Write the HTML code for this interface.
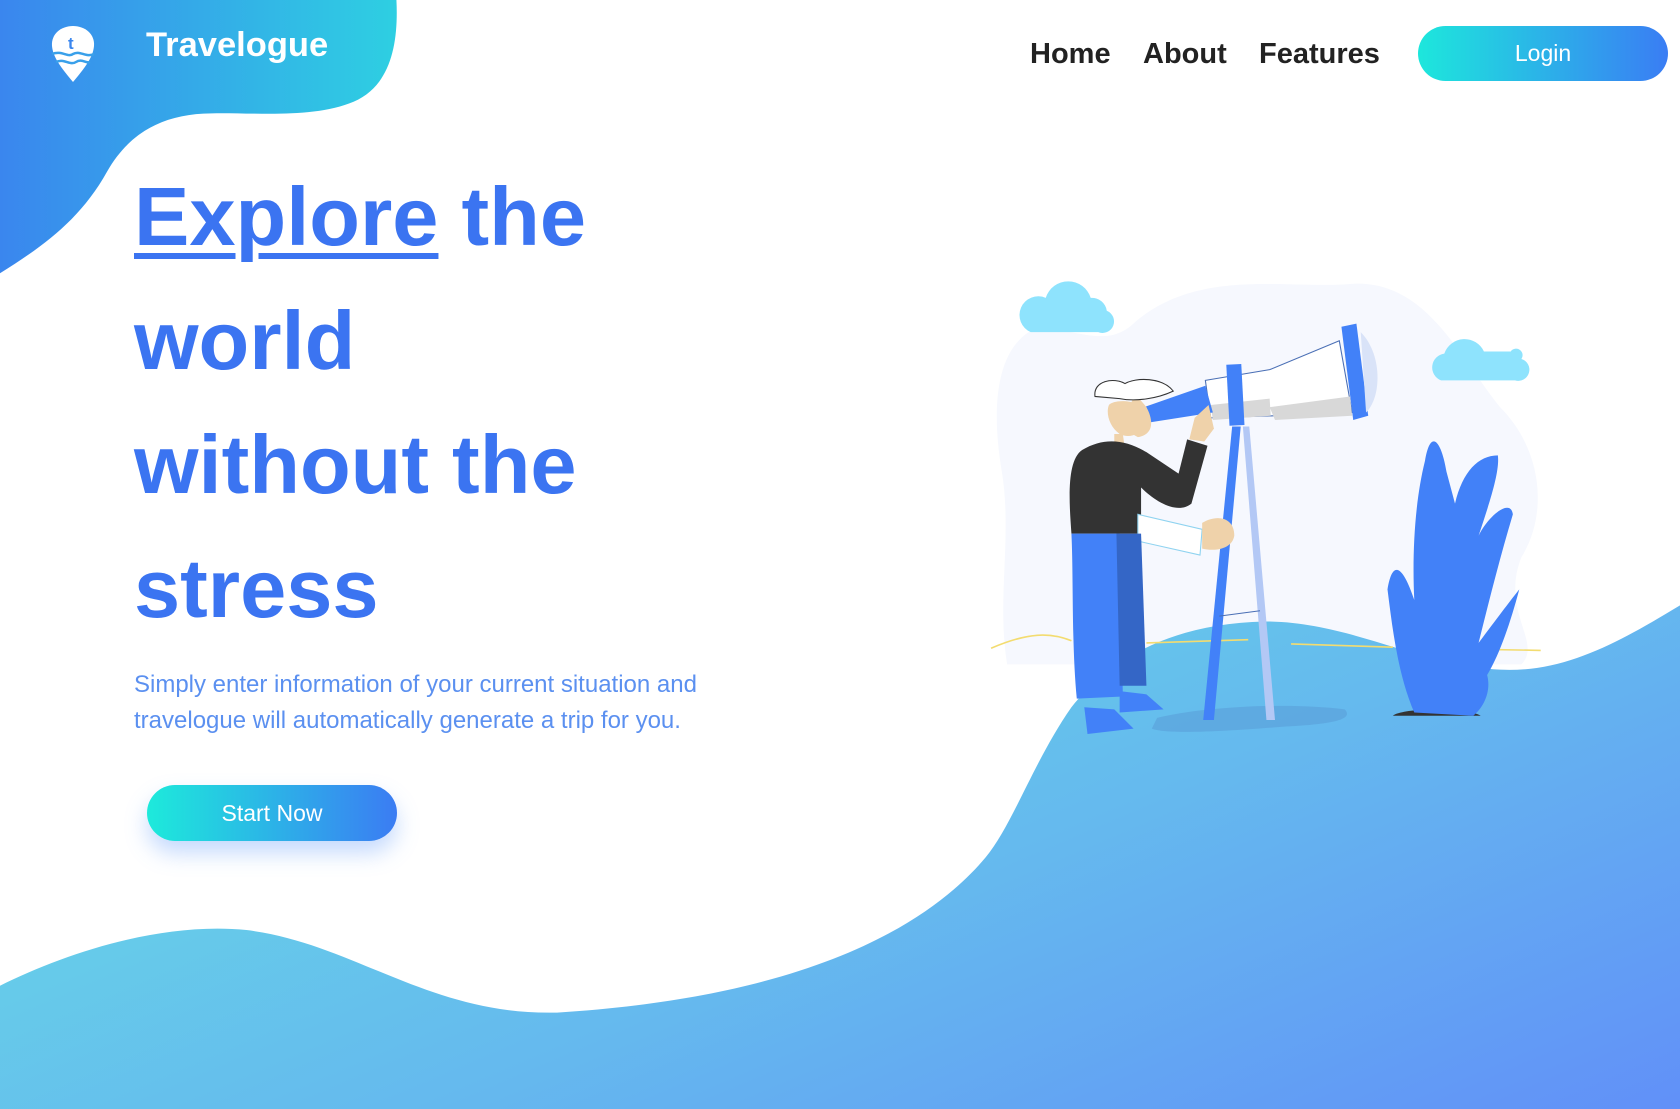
<!DOCTYPE html>
<html><head><meta charset="utf-8"><style>
html,body{margin:0;padding:0;width:1680px;height:1109px;overflow:hidden;background:#fff;font-family:"Liberation Sans",Arial,sans-serif}
svg.bg{position:absolute;left:0;top:0;width:1680px;height:1109px}
.t{position:absolute;white-space:nowrap}
.brand{left:146px;top:26px;font-size:34.5px;font-weight:bold;color:#fff}
.nav{top:38px;font-size:29px;font-weight:bold;color:#222}
.login{left:1418px;top:26px;width:250px;height:55px;border-radius:28px;background:linear-gradient(90deg,#1de7dc,#3a7df4);color:#fff;font-size:23px;text-align:center;line-height:55px}
h1{position:absolute;left:134px;top:155px;margin:0;font-size:83px;line-height:124px;font-weight:bold;color:#3b74f1}
h1 u{text-decoration-thickness:6px;text-underline-offset:8px}
.p{left:134px;top:667px;font-size:24px;line-height:36px;color:#5b90f0}
.btn{left:147px;top:785px;width:250px;height:56px;border-radius:28px;background:linear-gradient(90deg,#1deadb,#3b7cf3);color:#fff;font-size:23px;text-align:center;line-height:56px;box-shadow:0 12px 22px rgba(90,150,250,.35)}
</style></head><body>
<svg class="bg" viewBox="0 0 1568 1035" preserveAspectRatio="none">
<defs>
<linearGradient id="g1" x1="0" y1="0" x2="1" y2="0"><stop offset="0" stop-color="#3a86ee"/><stop offset="1" stop-color="#2ecfe2"/></linearGradient>
<linearGradient id="g2" x1="0" y1="0.3" x2="1" y2="1"><stop offset="0" stop-color="#66d8e6"/><stop offset="0.5" stop-color="#65b9ee"/><stop offset="1" stop-color="#6190f8"/></linearGradient>
</defs>
<path d="M0 0H370C372 40 365 80 330 95C290 112 230 104 190 106C150 108 120 125 100 160C75 205 40 230 0 255Z" fill="url(#g1)"/>
<path d="M960 310C1000 300 1030 330 1060 300C1120 250 1200 270 1260 265C1330 260 1360 330 1400 380C1440 420 1445 480 1420 520C1400 570 1440 600 1420 620L940 620C930 560 945 500 935 440C925 380 930 330 960 310Z" fill="#f6f8fe"/>
<path d="M1568 565C1510 600 1460 628 1400 625C1320 620 1260 580 1180 580C1100 582 1040 610 1000 660C965 710 945 770 920 800C870 860 760 930 520 945C400 948 330 880 230 868C150 860 60 890 0 920V1035H1568Z" fill="url(#g2)"/>
<path d="M925 605C960 590 980 590 1000 598M1070 600L1165 597M1205 601L1300 604M1380 606L1438 607" stroke="#f3dc70" stroke-width="1.5" fill="none"/>
<path d="M962 310H1025A10 10 0 0 0 1033 290A14 14 0 0 0 1018 278A22 22 0 0 0 976 278A14 14 0 0 0 962 310Z" fill="#8ee3fd"/>
<path d="M1345 355H1414A8 8 0 0 0 1420 335A6 6 0 0 0 1410 328H1385A20 20 0 0 0 1348 330A13 13 0 0 0 1345 355Z" fill="#8ee3fd"/>
<path d="M1080 670C1120 660 1200 655 1255 662C1265 672 1240 676 1200 678C1150 682 1090 686 1075 680Z" fill="#5a9fd8" opacity=".6"/>
<path d="M1125 355L1185 345L1250 318L1262 385L1190 388L1130 390Z" fill="#fff" stroke="#4a6fb5" stroke-width="1"/>
<path d="M1185 380L1260 370L1262 388L1190 392ZM1130 378L1185 372L1186 388L1132 392Z" fill="#d8d8d8"/>
<path d="M1252 305L1266 302L1277 388L1263 392Z" fill="#4281f8"/>
<path d="M1270 310C1290 330 1290 370 1275 385Z" fill="#d9e3f8"/>
<path d="M1062 382L1125 360L1132 385L1068 395Z" fill="#4281f8"/>
<rect x="1146" y="340" width="14" height="57" fill="#4281f8" transform="rotate(-3 1153 368)"/>
<path d="M1150 398L1158 398L1133 672L1123 672Z" fill="#4281f8"/>
<path d="M1160 398L1166 398L1190 672L1182 672Z" fill="#b3c8f5"/>
<path d="M1138 575L1176 570" stroke="#4a6fb5" stroke-width="1"/>
<path d="M1060 368C1050 385 1045 400 1062 408C1075 406 1078 395 1070 380Z" fill="#efd2aa"/>
<path d="M1022 370C1020 355 1040 352 1050 358C1060 352 1085 352 1095 365C1080 372 1060 375 1045 372Z" fill="#fff" stroke="#333" stroke-width="1"/>
<path d="M1035 378C1040 372 1070 372 1070 390C1068 405 1055 410 1045 405C1035 398 1032 385 1035 378Z" fill="#efd2aa"/>
<path d="M1040 405L1048 405L1050 420L1040 420Z" fill="#efd2aa"/>
<path d="M1010 420C1030 408 1050 410 1070 422L1100 442L1108 410L1127 416L1112 470C1100 480 1080 470 1065 455L1065 498L1000 498C998 470 995 430 1010 420Z" fill="#333"/>
<path d="M1115 390L1128 378L1133 400L1124 412L1110 410Z" fill="#efd2aa"/>
<path d="M1062 480L1122 494L1120 518L1062 505Z" fill="#fff" stroke="#8fd3f0" stroke-width="1"/>
<path d="M1122 488C1135 480 1152 482 1152 500C1150 512 1135 515 1122 512Z" fill="#efd2aa"/>
<path d="M1000 498L1045 498L1048 650L1005 652C1000 600 1002 540 1000 498Z" fill="#4281f8"/>
<path d="M1042 498L1065 498L1070 640L1045 640Z" fill="#3466c6"/>
<path d="M1012 660L1040 662L1058 680L1015 685Z M1045 645L1070 648L1086 662L1045 665Z" fill="#4281f8"/>
<path d="M1300 668C1310 660 1370 660 1382 668Z" fill="#333"/>
<path d="M1320 665C1305 630 1300 590 1295 550C1300 520 1310 530 1320 560C1318 520 1320 470 1330 430C1335 400 1345 410 1350 440L1358 470C1365 440 1380 425 1398 425C1400 440 1390 470 1380 500C1390 480 1410 465 1412 480C1400 520 1390 560 1380 600C1395 580 1410 560 1418 550C1410 580 1400 610 1388 630C1392 645 1385 660 1375 668Z" fill="#4281f8"/>
</svg>
<div class="t brand">Travelogue</div>
<svg style="position:absolute;left:50px;top:24px" width="46" height="60" viewBox="0 0 46 60"><path d="M23 2C35 2 45 10 44 22C43 32 38 40 23 58C8 40 3 32 2 22C1 10 11 2 23 2Z" fill="#fff"/><path d="M2 30C12 26 18 34 23 30C30 26 36 34 44 30M6 38C14 34 20 42 26 38C32 34 36 40 40 38" stroke="#39a0ea" stroke-width="2.5" fill="none"/><text x="18" y="25" font-size="17" font-weight="bold" fill="#3a86ee" font-family="Liberation Sans">t</text></svg>
<div class="t nav" style="left:1030px">Home</div>
<div class="t nav" style="left:1143px">About</div>
<div class="t nav" style="left:1259px">Features</div>
<div class="t login">Login</div>
<h1><u>Explore</u> the<br>world<br>without the<br>stress</h1>
<div class="t p">Simply enter information of your current situation and<br>travelogue will automatically generate a trip for you.</div>
<div class="t btn">Start Now</div>
</body></html>
